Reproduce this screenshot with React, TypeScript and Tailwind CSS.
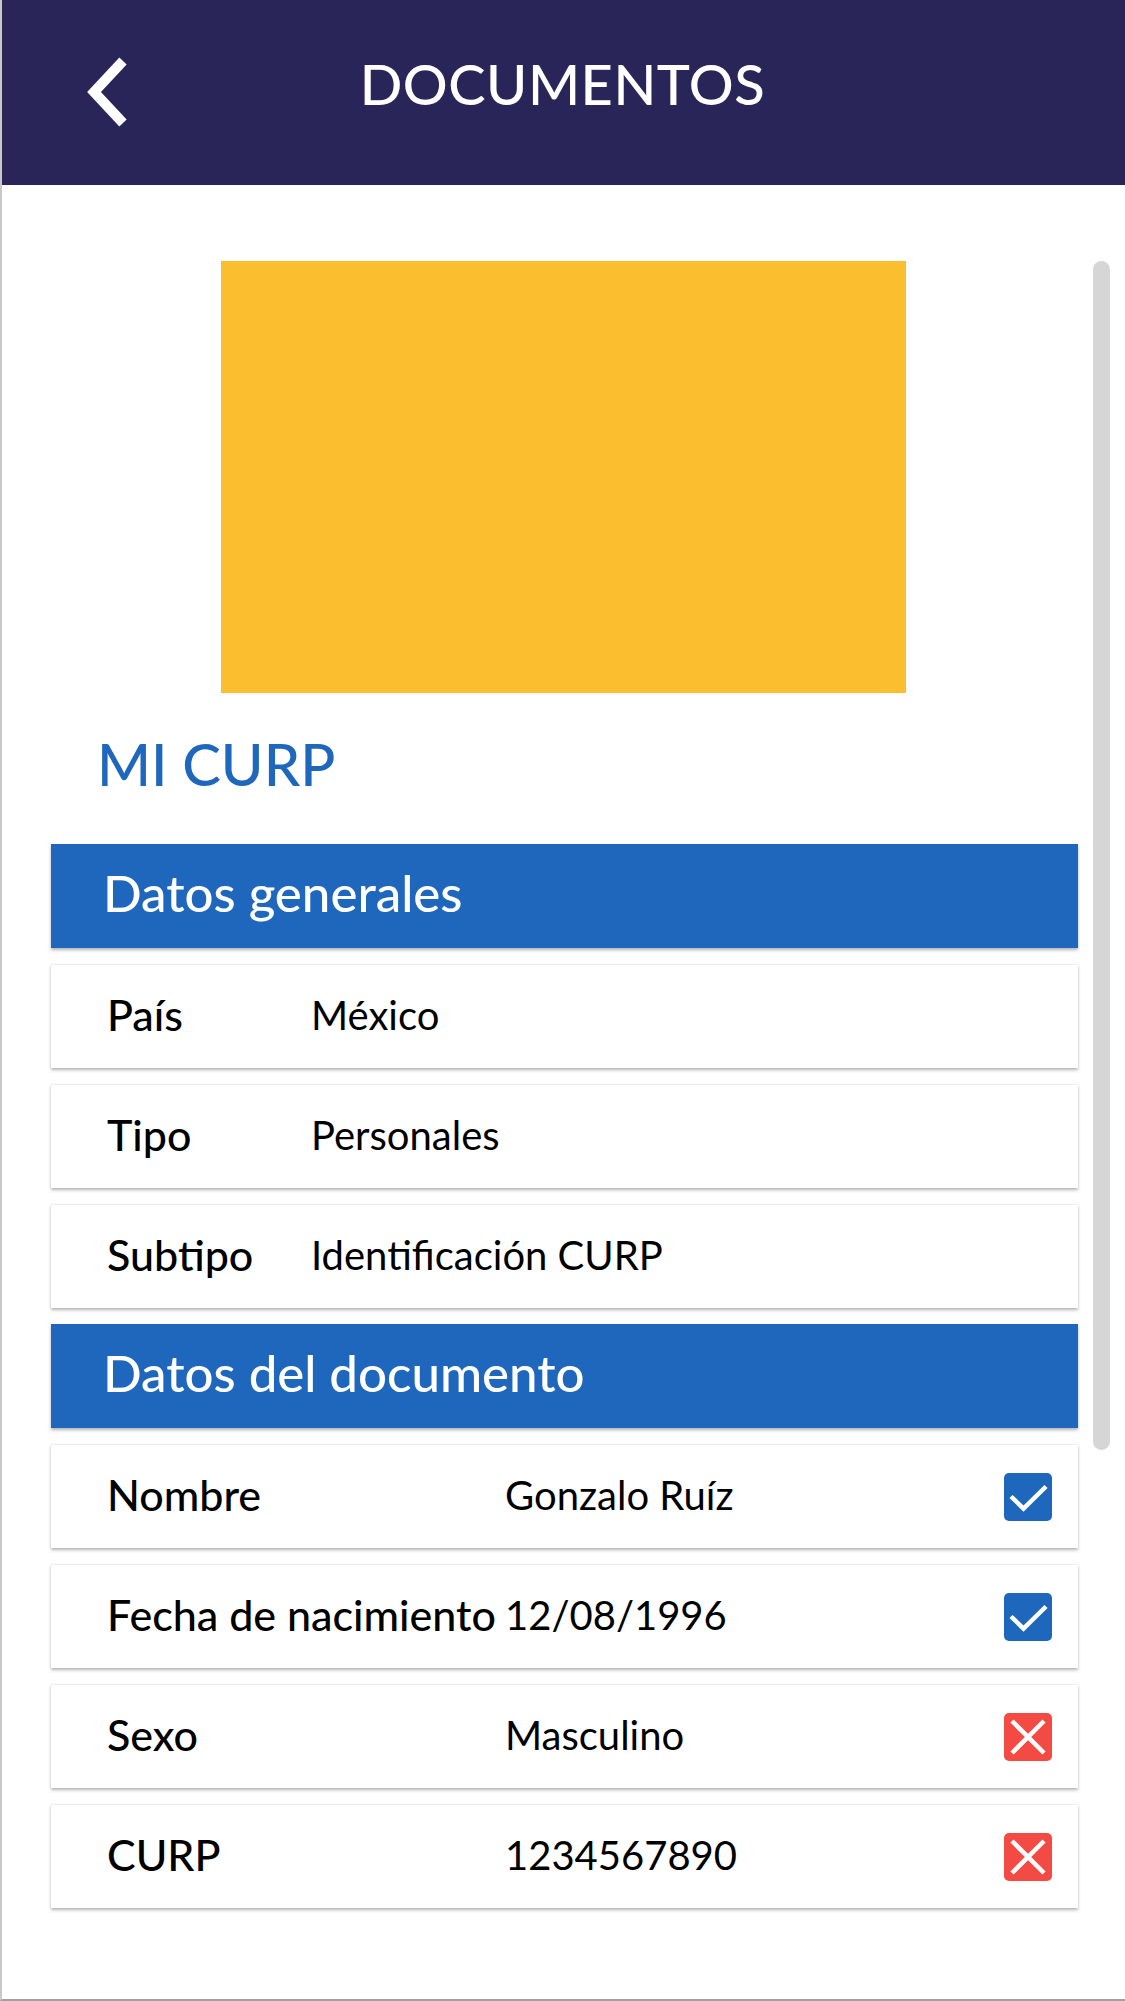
import * as React from "react";

type Row = { label: string; value: string; ok?: boolean };

const general: Row[] = [
  { label: "País", value: "México" },
  { label: "Tipo", value: "Personales" },
  { label: "Subtipo", value: "Identificación CURP" },
];

const documento: Row[] = [
  { label: "Nombre", value: "Gonzalo Ruíz", ok: true },
  { label: "Fecha de nacimiento", value: "12/08/1996", ok: true },
  { label: "Sexo", value: "Masculino", ok: false },
  { label: "CURP", value: "1234567890", ok: false },
];

function CheckBadge({ ok }: { ok: boolean }) {
  if (ok) {
    return (
      <div className="w-[48px] h-[48px] rounded-[5px] bg-[#1f67bd] flex items-center justify-center">
        <svg width="48" height="48" viewBox="0 0 48 48">
          <path d="M7 23.5 L19.5 35.5 L42 13.5" fill="none" stroke="#fff" strokeWidth="4.5" />
        </svg>
      </div>
    );
  }
  return (
    <div className="w-[48px] h-[48px] rounded-[5px] bg-[#f44a44] flex items-center justify-center">
      <svg width="48" height="48" viewBox="0 0 48 48">
        <path d="M8 8 L40 40 M40 8 L8 40" fill="none" stroke="#fff" strokeWidth="4.5" />
      </svg>
    </div>
  );
}

function SectionHeader({ title }: { title: string }) {
  return (
    <div className="h-[104px] bg-[#1f67bd] flex items-center pl-[52px] pb-[8px] shadow-[0_2px_3px_rgba(0,0,0,0.3)]">
      <span className="text-white text-[51px] font-medium leading-none">{title}</span>
    </div>
  );
}

function DataRow({ row, labelWidth }: { row: Row; labelWidth: string }) {
  return (
    <div className="h-[104px] bg-white flex items-center pl-[56px] pr-[26px] border-t border-[#eeeeee] shadow-[0_2px_3px_rgba(0,0,0,0.3)]">
      <span className={`${labelWidth} shrink-0 whitespace-nowrap text-[43px] font-medium text-black leading-none -mt-[4px]`}>
        {row.label}
      </span>
      <span className="flex-1 whitespace-nowrap text-[40px] text-black leading-none -mt-[4px]">{row.value}</span>
      {row.ok !== undefined && <CheckBadge ok={row.ok} />}
    </div>
  );
}

export default function App() {
  return (
    <div
      className="relative w-[1125px] h-[2001px] bg-white flex flex-col border-l-2 border-b-2 border-l-[#c8c8c8] border-b-[#a0a0a0] overflow-hidden"
      style={{ fontFamily: "Lato, 'Noto Sans', sans-serif" }}
    >
      <header className="relative h-[185px] bg-[#2a2559] flex items-center justify-center shrink-0">
        <svg className="absolute left-[80px] top-[56px]" width="52" height="72" viewBox="0 0 52 72">
          <path d="M41 5 L12 36 L41 67" fill="none" stroke="#fff" strokeWidth="10" strokeLinejoin="miter" />
        </svg>
        <h1 className="text-white text-[56px] font-medium leading-none tracking-[0.5px] -mt-[18px] -ml-[2px]">
          DOCUMENTOS
        </h1>
      </header>

      <div className="flex flex-col">
        <div className="mt-[76px] mx-auto w-[685px] h-[432px] bg-[#fbbe2e]" />

        <div className="mt-[42px] pl-[95px] text-[58px] font-medium leading-none text-[#1f67bd]">MI CURP</div>

        <div className="mt-[51px] ml-[49px] w-[1027px] flex flex-col gap-[16px]">
          <SectionHeader title="Datos generales" />
          {general.map((r) => (
            <DataRow key={r.label} row={r} labelWidth="w-[204px]" />
          ))}
          <SectionHeader title="Datos del documento" />
          {documento.map((r) => (
            <DataRow key={r.label} row={r} labelWidth="w-[398px]" />
          ))}
        </div>
      </div>

      <div className="absolute left-[1091px] top-[261px] w-[17px] h-[1189px] rounded-full bg-[#d6d6d6]" />
    </div>
  );
}
